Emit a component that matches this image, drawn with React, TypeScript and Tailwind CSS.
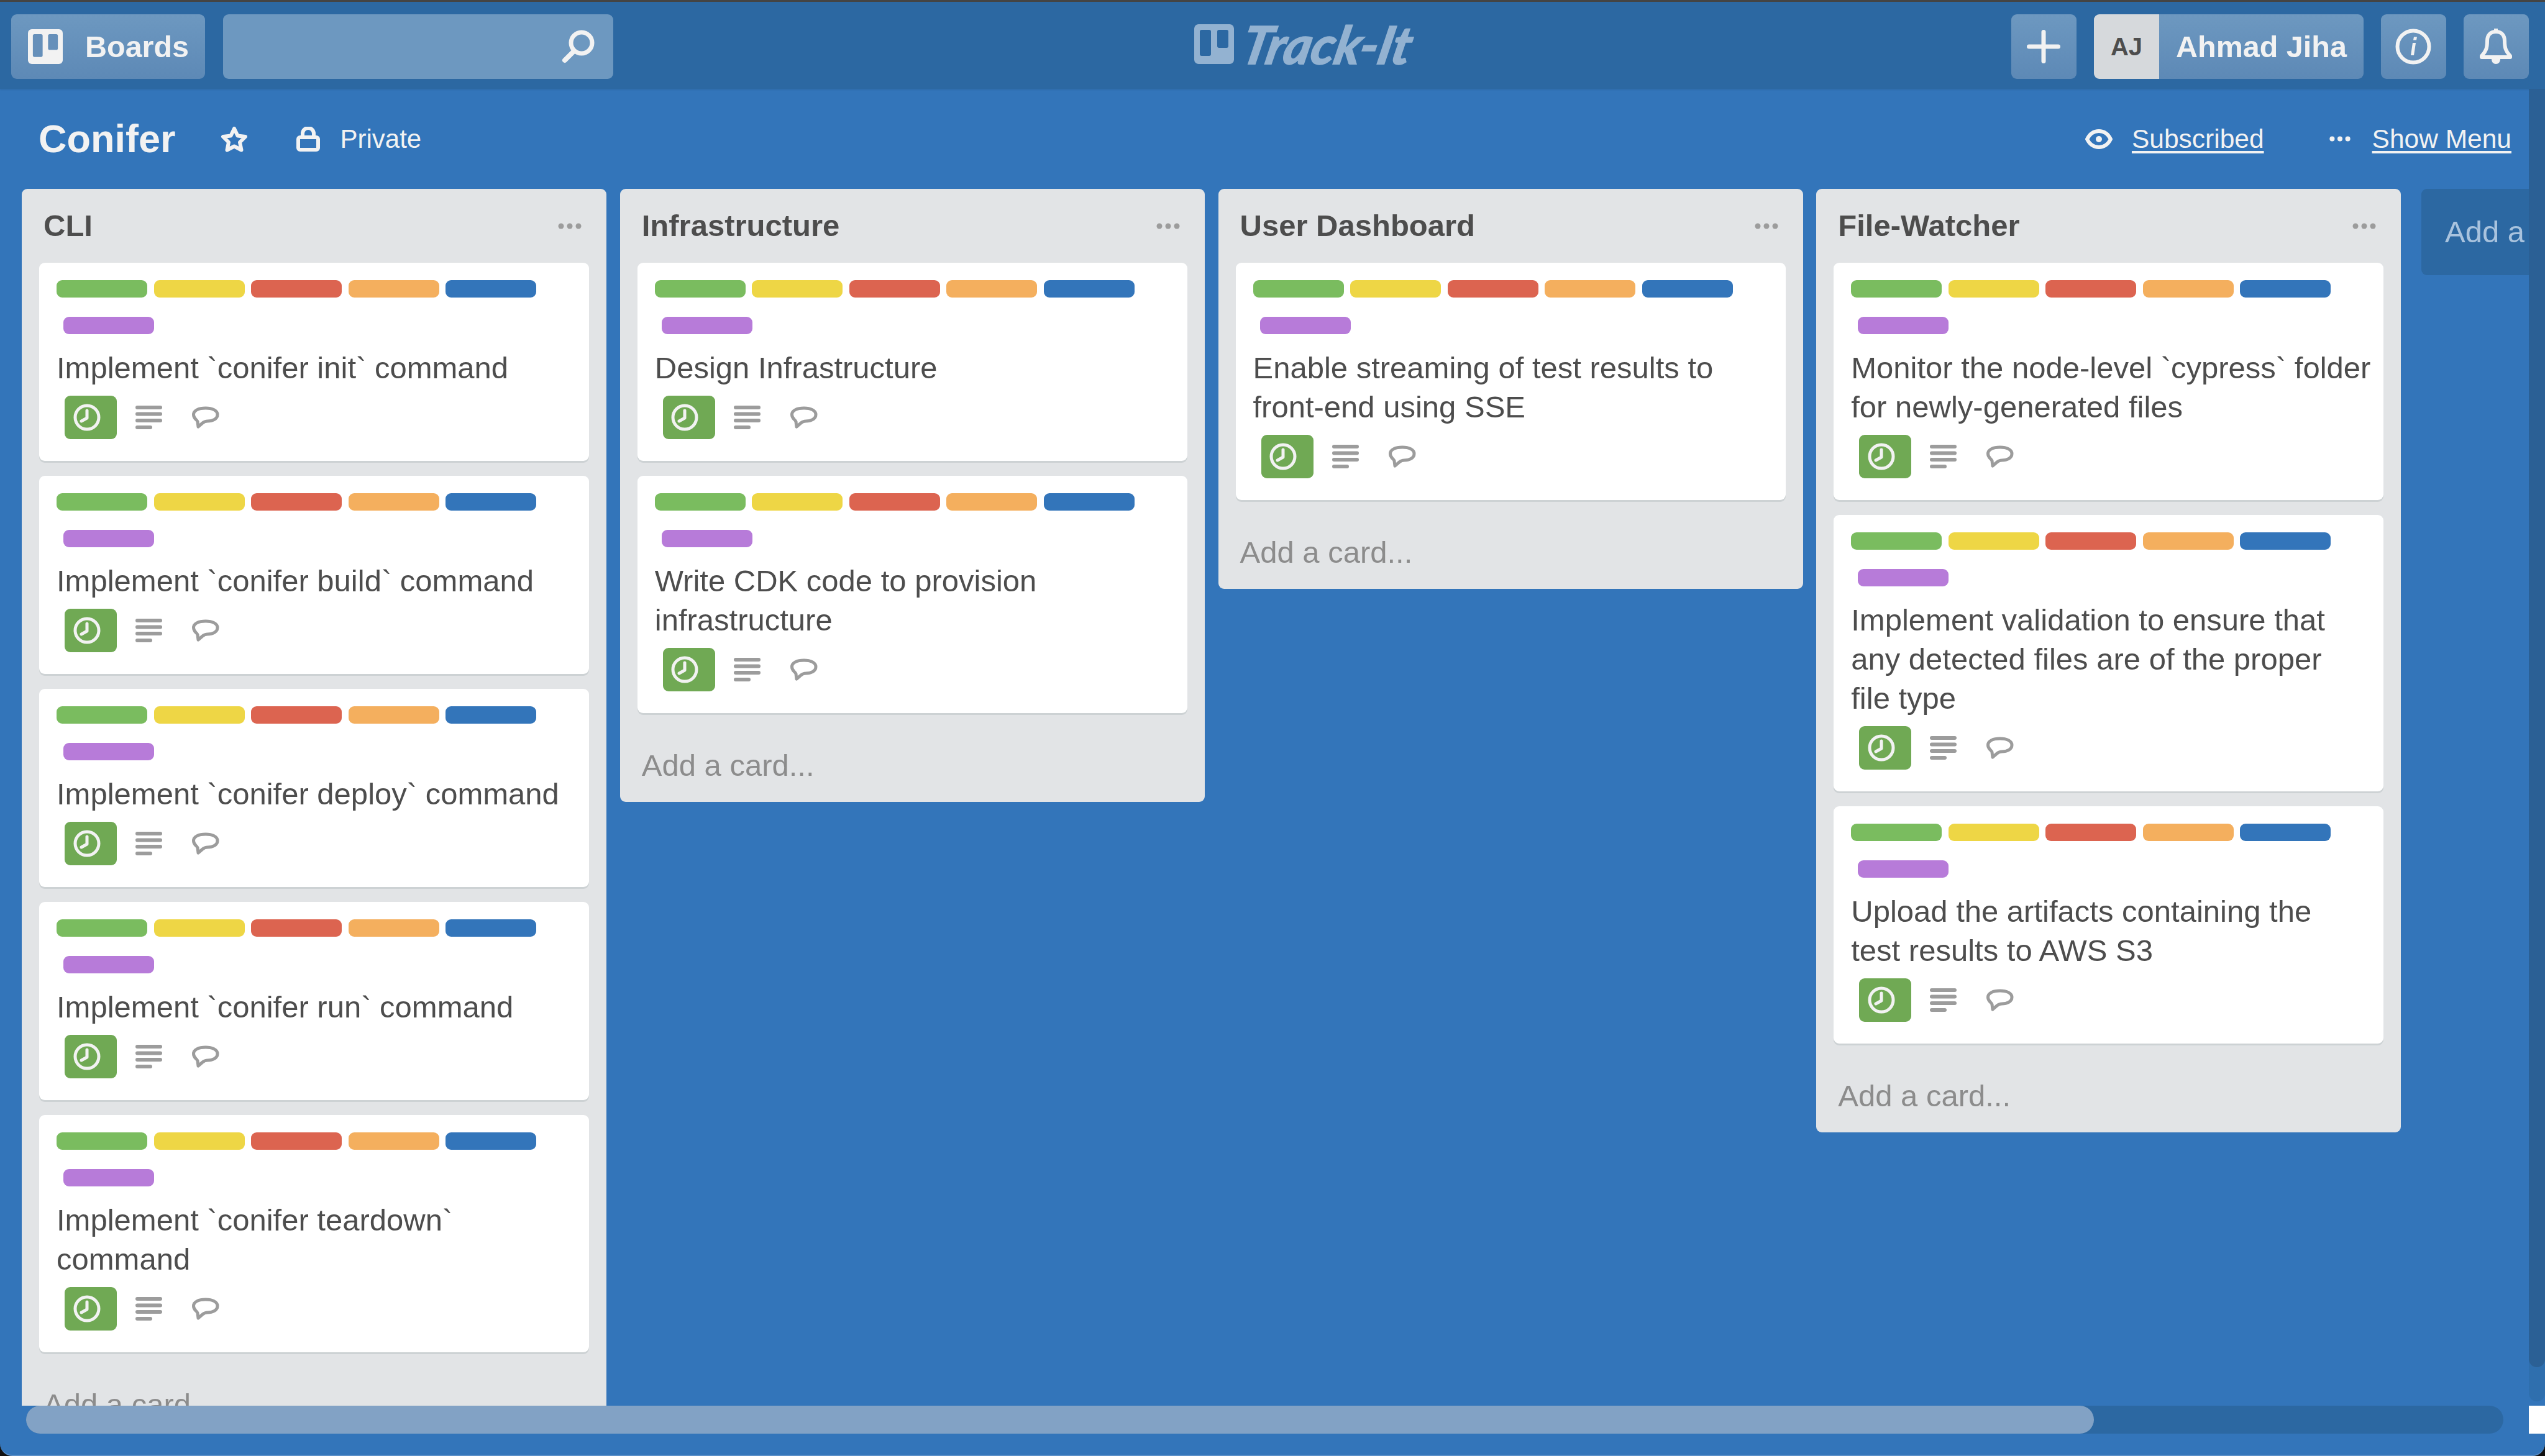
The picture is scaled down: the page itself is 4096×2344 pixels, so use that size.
const SANS = "font-['Liberation_Sans',Arial,sans-serif]";

const LABEL_COLORS = ["bg-[#7abc5f]", "bg-[#eed645]", "bg-[#dc6450]", "bg-[#f4af5e]", "bg-[#3375ba]", "bg-[#b77bd9]"];

const LISTS: { title: string; cards: string[][] }[] = [
  {
    title: "CLI",
    cards: [
      ["Implement `conifer init` command"],
      ["Implement `conifer build` command"],
      ["Implement `conifer deploy` command"],
      ["Implement `conifer run` command"],
      ["Implement `conifer teardown`", "command"],
    ],
  },
  {
    title: "Infrastructure",
    cards: [["Design Infrastructure"], ["Write CDK code to provision", "infrastructure"]],
  },
  {
    title: "User Dashboard",
    cards: [["Enable streaming of test results to", "front-end using SSE"]],
  },
  {
    title: "File-Watcher",
    cards: [
      ["Monitor the node-level `cypress` folder", "for newly-generated files"],
      ["Implement validation to ensure that", "any detected files are of the proper", "file type"],
      ["Upload the artifacts containing the", "test results to AWS S3"],
    ],
  },
];

function BoardIcon({ size, color, hole }: { size: number; color: string; hole: string }) {
  return (
    <svg width={size} height={size} viewBox="0 0 64 64">
      <rect width="64" height="64" rx="7" fill={color} />
      <rect x="9" y="9" width="18" height="42" rx="3" fill={hole} />
      <rect x="37" y="9" width="18" height="29" rx="3" fill={hole} />
    </svg>
  );
}

function HeaderButton({ children, className }: { children: React.ReactNode; className?: string }) {
  return (
    <div className={`flex h-[104px] items-center justify-center rounded-[9px] bg-linear-to-b from-[#6d98c0] to-[#5d89b6] ${className ?? ""}`}>
      {children}
    </div>
  );
}

function Dots({ color, size = 40 }: { color: string; size?: number }) {
  return (
    <svg width={size} height={size / 4} viewBox="0 0 40 10">
      <circle cx="6" cy="5" r="4.5" fill={color} />
      <circle cx="20" cy="5" r="4.5" fill={color} />
      <circle cx="34" cy="5" r="4.5" fill={color} />
    </svg>
  );
}

function Badges() {
  return (
    <div className="ml-[13px] mt-[13px] flex items-center">
      <div className="flex h-[70px] w-[84px] items-center justify-center rounded-[9px] bg-[#70a954] pr-[13px]">
        <svg width="44" height="44" viewBox="0 0 44 44" fill="none" stroke="#f2f2f2" strokeLinecap="round">
          <circle cx="22" cy="22" r="19" strokeWidth="5" />
          <path d="M22 11v12l-9 5" strokeWidth="5" strokeLinejoin="round" />
        </svg>
      </div>
      <svg className="ml-[30px]" width="43" height="38" viewBox="0 0 43 38" fill="#9c9c9c">
        <rect y="0" width="43" height="6" rx="3" />
        <rect y="10.500" width="43" height="6" rx="3" />
        <rect y="21" width="43" height="6" rx="3" />
        <rect y="32" width="27" height="6" rx="3" />
      </svg>
      <svg className="ml-[48px]" width="44" height="36" viewBox="0 0 44 36" fill="none" stroke="#9c9c9c" strokeWidth="5" strokeLinejoin="round">
        <path d="M22 3c10.500 0 19 3.500 19 10.500S33 24 25 24c-3 0-5 .5-8 3l-7 6-1-8c0-1-1-2-3-4-2-2-3.500-4-3.500-7.500C2.500 6.500 11 3 22 3Z" />
      </svg>
    </div>
  );
}

function Card({ lines }: { lines: string[] }) {
  return (
    <div className="mb-[24px] rounded-[9px] bg-white pb-[35px] pl-[28px] pr-[8px] pt-[28px] shadow-[0_3px_0_#cdd2d4]">
      <div className="flex flex-wrap gap-x-[10.5px] gap-y-[31px] pr-[15px]">
        {LABEL_COLORS.map((color, i) => (
          <div key={color} className={`h-[28px] w-[146px] rounded-[9px] ${color} ${i === 5 ? "ml-[11px]" : ""}`} />
        ))}
      </div>
      <div className="mt-[23px] text-[49px] leading-[63px] text-[#4d4d4d]">
        {lines.map((line) => (
          <div key={line} className="whitespace-nowrap">{line}</div>
        ))}
      </div>
      <Badges />
    </div>
  );
}

function BoardList({ title, cards }: { title: string; cards: string[][] }) {
  return (
    <div className="w-[941px] shrink-0 self-start rounded-[9px] bg-[#e2e4e6] px-[28px]">
      <div className="flex h-[119px] items-center justify-between pl-[7px] pr-[11px]">
        <div className="text-[49px] font-bold text-[#4d4d4d]">{title}</div>
        <Dots color="#9c9c9c" />
      </div>
      {cards.map((lines) => (
        <Card key={lines[0]} lines={lines} />
      ))}
      <div className="-mt-[24px] flex h-[143px] items-center pl-[7px] pt-[26px] text-[49px] text-[#8c8c8c]">Add a card...</div>
    </div>
  );
}

export default function App() {
  return (
    <div className="h-[2344px] w-[4096px] bg-[#111111]">
      <div className={`flex h-full w-full flex-col overflow-hidden rounded-b-[20px] border-b-2 border-[#5a8fc8] bg-[#3375ba] ${SANS}`}>
        <div className="h-[3px] shrink-0 bg-[#444444]" />
        <header className="flex h-[140px] shrink-0 items-start justify-between bg-[#2c68a2] pl-[18px] pr-[26px] pt-[20px] shadow-[0_2px_2px_rgba(0,0,0,0.08)]">
          <div className="flex gap-[29px]">
            <HeaderButton className="w-[312px] justify-start pl-[27px]">
              <BoardIcon size={56} color="#f2f2f2" hole="#6690ba" />
              <span className="ml-[36px] text-[48.500px] font-bold text-[#f2f2f2]">Boards</span>
            </HeaderButton>
            <div className="flex h-[104px] w-[628px] items-center justify-end rounded-[9px] bg-[#6d98c0] pr-[29px]">
              <svg width="56" height="56" viewBox="0 0 56 56" fill="none" stroke="#f2f2f2" strokeLinecap="round">
                <circle cx="34" cy="22" r="17" strokeWidth="7" />
                <path d="M21 36 7 50" strokeWidth="8" />
              </svg>
            </div>
          </div>
          <div className="mr-[28px] flex items-center pt-[4px]">
            <BoardIcon size={64} color="#93b2d1" hole="#2c68a2" />
            <span className="ml-[15px] -skew-x-12 font-['Lato',sans-serif] text-[84px] font-bold italic leading-[88px] text-[#93b2d1] [-webkit-text-stroke:2px_#93b2d1]">Track-It</span>
          </div>
          <div className="flex gap-[28px]">
            <HeaderButton className="w-[105px]">
              <svg width="54" height="54" viewBox="0 0 54 54" fill="#f2f2f2">
                <rect x="23.500" width="7" height="54" rx="3.500" />
                <rect y="23.500" width="54" height="7" rx="3.500" />
              </svg>
            </HeaderButton>
            <HeaderButton className="w-[434px] justify-start overflow-hidden">
              <div className="flex h-full w-[105px] items-center justify-center bg-[#d6d9dc] text-[40px] font-bold text-[#4d4d4d]">AJ</div>
              <span className="ml-[27px] text-[48.500px] font-bold text-[#f2f2f2]">Ahmad Jiha</span>
            </HeaderButton>
            <HeaderButton className="w-[105px]">
              <svg width="58" height="58" viewBox="0 0 58 58" fill="none">
                <circle cx="29" cy="29" r="25.500" stroke="#f2f2f2" strokeWidth="6" />
                <path d="M30 13.500h5l-1 5h-5zM28 23h5l-3 20h-5z" fill="#f2f2f2" />
              </svg>
            </HeaderButton>
            <HeaderButton className="w-[105px]">
              <svg width="56" height="60" viewBox="0 0 56 60" fill="none" stroke="#f2f2f2" strokeWidth="6" strokeLinejoin="round">
                <path d="M28 6c-9 0-14 6-14 15 0 11-2 17-9 24v2h46v-2c-7-7-9-13-9-24 0-9-5-15-14-15Z" />
                <path d="M28 1v5" />
                <path d="M21 50c0 5 3 8 7 8s7-3 7-8Z" fill="#f2f2f2" stroke="none" />
              </svg>
            </HeaderButton>
          </div>
        </header>
        <div className="flex min-h-0 flex-1">
          <main className="flex min-w-0 flex-1 flex-col">
            <div className="flex h-[161px] shrink-0 items-center justify-between pl-[62px] pr-[28px] text-[#f2f2f2]">
              <div className="flex items-center">
                <span className="text-[63px] font-bold leading-none">Conifer</span>
                <svg className="ml-[72px]" width="44" height="42" viewBox="0 0 44 42" fill="none" stroke="#f2f2f2" strokeWidth="6" strokeLinejoin="round">
                  <path d="m22 4 5.500 11.500L40 17l-9 9 2.500 12.500L22 32.500 10.500 38.500 13 26l-9-9 12.500-1.500Z" />
                </svg>
                <svg className="ml-[78px]" width="38" height="40" viewBox="0 0 38 40" fill="none" stroke="#f2f2f2" strokeWidth="6">
                  <rect x="3" y="17" width="32" height="20" rx="3" />
                  <path d="M10 17v-6a9 9 0 0 1 18 0v6" />
                </svg>
                <span className="ml-[33px] text-[42px]">Private</span>
              </div>
              <div className="flex items-center text-[42.500px]">
                <svg width="44" height="32" viewBox="0 0 44 32" fill="none" stroke="#f2f2f2" strokeWidth="6" strokeLinejoin="round">
                  <path d="M22 3C32 3 38 10 41 16c-3 6-9 13-19 13S6 22 3 16C6 10 12 3 22 3Z" />
                  <circle cx="22" cy="16" r="5" fill="#f2f2f2" stroke="none" />
                </svg>
                <span className="ml-[31px] underline decoration-[4px] underline-offset-[5px]">Subscribed</span>
                <div className="ml-[104px]"><Dots color="#f2f2f2" size={36} /></div>
                <span className="ml-[34px] underline decoration-[4px] underline-offset-[5px]">Show Menu</span>
              </div>
            </div>
            <div className="flex min-h-0 flex-1 gap-[21.750px] overflow-hidden pl-[35px]">
              {LISTS.map((list) => (
                <BoardList key={list.title} title={list.title} cards={list.cards} />
              ))}
              <div className="ml-[11px] flex h-[139px] w-[200px] shrink-0 items-center overflow-hidden rounded-l-[9px] bg-[#2c68a2] pl-[38px] text-[49px] whitespace-nowrap text-[#a9c3de]">Add a list...</div>
            </div>
            <div className="mb-[34px] flex h-[45px] shrink-0 pl-[42px] pr-[41px]">
              <div className="h-full flex-1 rounded-full bg-[#2c68a2]">
                <div className="h-full w-[3328px] rounded-full bg-[#82a2c5]" />
              </div>
            </div>
          </main>
          <aside className="flex w-[26px] shrink-0 flex-col">
            <div className="mb-[7px] flex-1 rounded-b-full bg-[#2f6fae]">
              <div className="h-[2058px] rounded-b-full bg-[#2b6095]" />
            </div>
            <div className="mb-[34px] h-[45px] bg-white" />
          </aside>
        </div>
      </div>
    </div>
  );
}
